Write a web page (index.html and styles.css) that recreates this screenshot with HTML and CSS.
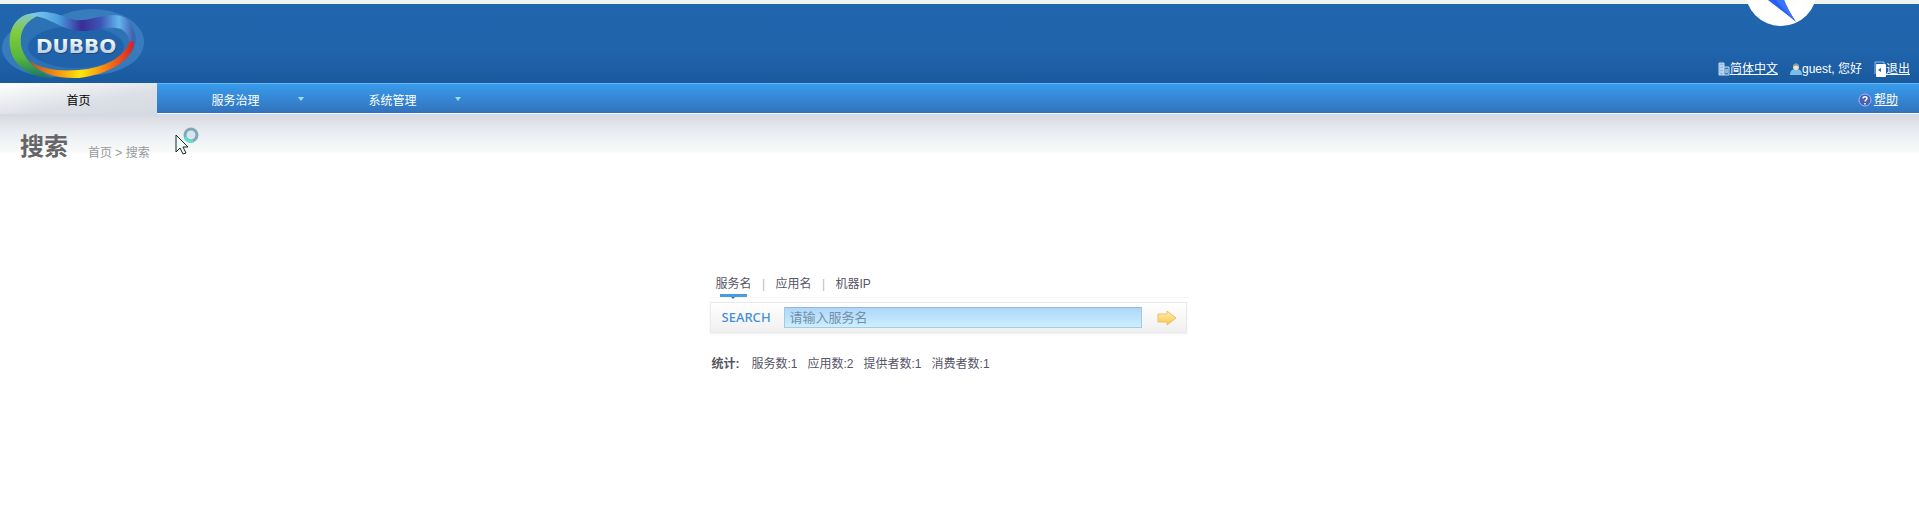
FILE: index.html
```html
<!DOCTYPE html>
<html lang="zh-CN">
<head>
    <meta charset="UTF-8">
    <meta name="viewport" content="width=device-width, initial-scale=1.0">
    <title>Dubbo</title>
    <link rel="stylesheet" href="styles.css">
</head>
<body>

    <header class="header">
        <a class="logo" href="#" aria-label="DUBBO">
            <svg width="146" height="79" viewBox="0 4 146 79">
                <defs>
                    <linearGradient id="top" x1="28" y1="0" x2="135" y2="0" gradientUnits="userSpaceOnUse">
                        <stop offset="0" stop-color="#8fd0f0"/>
                        <stop offset=".28" stop-color="#4aa0e0"/>
                        <stop offset=".5" stop-color="#392d96"/>
                        <stop offset=".68" stop-color="#3c55b4"/>
                        <stop offset=".85" stop-color="#62b7ee"/>
                        <stop offset="1" stop-color="#4052a8"/>
                    </linearGradient>
                    <linearGradient id="left" x1="0" y1="14" x2="0" y2="76" gradientUnits="userSpaceOnUse">
                        <stop offset="0" stop-color="#7fc8c8"/>
                        <stop offset=".3" stop-color="#82cc3c"/>
                        <stop offset=".7" stop-color="#55b83c"/>
                        <stop offset="1" stop-color="#1f7c60"/>
                    </linearGradient>
                    <linearGradient id="bottom" x1="28" y1="0" x2="134" y2="0" gradientUnits="userSpaceOnUse">
                        <stop offset="0" stop-color="#a5552c"/>
                        <stop offset=".25" stop-color="#f28a10"/>
                        <stop offset=".5" stop-color="#ffe60a"/>
                        <stop offset=".75" stop-color="#f47a12"/>
                        <stop offset="1" stop-color="#d81e28"/>
                    </linearGradient>
                    <linearGradient id="letters" x1="0" y1="38" x2="0" y2="54" gradientUnits="userSpaceOnUse">
                        <stop offset="0" stop-color="#fff"/>
                        <stop offset="1" stop-color="#bccbdc"/>
                    </linearGradient>
                </defs>
                <ellipse cx="52" cy="48" rx="50" ry="29" fill="#4a8cca" opacity=".6"/>
                <ellipse cx="92" cy="42" rx="52" ry="33" fill="#4386c4" opacity=".7"/>
                <path d="M24 19C48 10 63 23 84 23S120 12 132 27C144 43 129 62 104 71C78 79 45 78 26 62C12 49 14 30 24 19Z" fill="#2e72b6"/>
                <ellipse cx="76" cy="47" rx="48" ry="21" fill="#2063ab"/>
                <path d="M34 13C9 15 5 42 14 59C22 72 37 78 54 78C38 72 24 61 21 45C19 30 26 20 42 14Z" fill="url(#left)"/>
                <path d="M29 15C45 7 60 16 75 20C90 22 107 12 121 16C131 19 135 28 134 43C133 49 131 53 129 52C130 42 130 34 121 29C108 25 98 31 82 31C62 31 51 17 29 15Z" fill="url(#top)"/>
                <path d="M28 60C44 71 62 71 79 70C104 68 124 58 130 41L134 42C134 60 107 75 79 78C56 79 38 73 28 60Z" fill="url(#bottom)"/>
                <text class="logo-shadow" x="37" y="54">DUBBO</text>
                <text class="logo-text" x="36" y="53" fill="url(#letters)">DUBBO</text>
            </svg>
        </a>
        <div class="user-bar">
            <span class="user-item">
                <svg width="12" height="14" viewBox="0 0 12 14">
                    <path d="M1 1h5v12H1z" fill="#8fb9e2" stroke="#c4dcf4"/>
                    <path d="M6 5h5v8H6z" fill="#3c7cbc" stroke="#c4dcf4"/>
                    <path d="M2 4h3M2 7h3M2 10h3M7 8h3M7 10h3" stroke="#dcecfb"/>
                </svg>
                <a href="#">简体中文</a>
            </span>
            <span class="user-item">
                <svg width="12" height="14" viewBox="0 0 12 14">
                    <path d="M0 13c0-4 2-6 6-6s6 2 6 6z" fill="#7cbdec"/>
                    <circle cx="6" cy="5" r="3" fill="#f3e4c0"/>
                    <path d="M3 5c0-5 6-5 6 0C7 3 5 3 3 5z" fill="#8c9a9c"/>
                </svg>
                <span>guest, 您好</span>
            </span>
            <span class="user-item">
                <svg width="12" height="16" viewBox="0 0 12 16">
                    <path d="M1 13V1h9v2" fill="none" stroke="#8fc0ea"/>
                    <rect x="2" y="3" width="10" height="13" rx="1" fill="#fff"/>
                    <path d="M4 9l3-2v4z" fill="#2868ac"/>
                </svg>
                <a href="#">退出</a>
            </span>
        </div>
        <svg class="bird" width="72" height="28" viewBox="0 0 72 28">
            <circle cx="36" cy="-10" r="36" fill="#fff"/>
            <path d="M23 0H39Q43 10 51 22Q44 16 36 10Z" fill="#2a5cf6"/>
            <path d="M31 0H39Q43 10 51 22Q40 12 31 0Z" fill="#3a74fb"/>
        </svg>
    </header>

    <nav class="nav">
        <a class="nav-item active" href="#">首页</a>
        <a class="nav-item" href="#">服务治理<span class="caret"></span></a>
        <a class="nav-item" href="#">系统管理<span class="caret"></span></a>
        <span class="help">
            <svg width="14" height="14" viewBox="0 0 14 14">
                <circle cx="7" cy="7" r="6" fill="#4b5fb4" stroke="#a9b9e6"/>
                <path d="M5 5.500C5 3 9 3 9 5.500C9 7 7 7 7 8.500M7 10v1.500" fill="none" stroke="#fff" stroke-width="1.500"/>
            </svg>
            <a href="#">帮助</a>
        </span>
    </nav>

    <div class="title-bar">
        <h1>搜索</h1>
        <div class="breadcrumb">首页 &gt; 搜索</div>
        <svg class="cursor" width="26" height="30" viewBox="0 0 26 30">
            <circle cx="16" cy="9" r="6" fill="#d9e6ee" stroke="#7fa9b8" stroke-width="3"/>
            <path d="M10 11A6 6 0 0 0 18 15" fill="none" stroke="#5fe0cb" stroke-width="3"/>
            <path d="M1 9V26L5 22L8 28L11 27L8 21H13Z" fill="#e8fbf6" stroke="#222"/>
        </svg>
    </div>

    <main class="search">
        <div class="tabs">
            <button type="button" class="tab current">服务名</button>
            <span class="sep">|</span>
            <button type="button" class="tab">应用名</button>
            <span class="sep">|</span>
            <button type="button" class="tab">机器IP</button>
        </div>
        <form class="search-bar">
            <label for="keyword">SEARCH</label>
            <input type="text" id="keyword" placeholder="请输入服务名">
            <button type="button" class="go" aria-label="搜索">
                <svg width="22" height="16" viewBox="0 0 22 16">
                    <defs>
                        <linearGradient id="arrow" x1="0" y1="0" x2="0" y2="1">
                            <stop offset="0" stop-color="#fff0b4"/>
                            <stop offset="1" stop-color="#f9c54a"/>
                        </linearGradient>
                    </defs>
                    <path d="M2 4H11V1L20 8L11 15V12H2Z" fill="url(#arrow)" stroke="#efbd68" stroke-linejoin="round"/>
                </svg>
            </button>
        </form>
        <div class="stats">
            <strong>统计:</strong>
            <span>服务数:1</span>
            <span>应用数:2</span>
            <span>提供者数:1</span>
            <span>消费者数:1</span>
        </div>
    </main>

</body>
</html>
```
FILE: styles.css
```css
body {
    margin: 0;
    font-family: "Liberation Sans", "Noto Sans CJK SC", sans-serif;
    font-size: 12px;
    line-height: 18px;
    color: #555566;
    background-color: #fff;
}

/* header */
.header {
    position: relative;
    display: flex;
    justify-content: space-between;
    align-items: flex-end;
    border-top: 4px solid #f1f3ef;
    background: linear-gradient(#2165ae, #2064ac 60%, #195a9e);
}

.logo svg {
    display: block;
}

.logo-text,
.logo-shadow {
    font-family: "DejaVu Sans", sans-serif;
    font-size: 20px;
    font-weight: bold;
}

.logo-shadow {
    fill: #174a80;
}

.user-bar {
    display: flex;
    gap: 12px;
    padding: 0 9px 5px 0;
    color: #fff;
}

.user-item,
.help {
    display: flex;
    align-items: center;
}

.user-bar a,
.help a {
    color: #fff;
    text-decoration: underline;
}

.bird {
    position: absolute;
    top: -4px;
    right: 102px;
}

/* menu */
.nav {
    display: flex;
    height: 29px;
    border-top: 1px solid #6cb8f5;
    border-bottom: 1px solid #fff;
    background: linear-gradient(#389cec, #3272bc);
}

.nav-item {
    position: relative;
    width: 157px;
    line-height: 34px;
    text-align: center;
    color: #fff;
    text-decoration: none;
}

.nav-item.active {
    margin: -1px 0;
    line-height: 36px;
    color: #000;
    background: linear-gradient(170deg, #fff, #dcdfe6 60%, #d4d9e2);
}

.caret {
    position: absolute;
    top: 13px;
    right: 10px;
    border: 3px solid transparent;
    border-top: 4px solid #9fdcfb;
    border-bottom: 0;
}

.help {
    gap: 2px;
    margin-left: auto;
    padding: 3px 21px 0 0;
}

/* page title */
.title-bar {
    position: relative;
    display: flex;
    align-items: flex-end;
    gap: 20px;
    height: 48px;
    padding-left: 20px;
    background: linear-gradient(#d2d8e6, #dcdee3 5px, #e9edf1 18px, #f9fafa 38px, #fff 39px);
}

.title-bar h1 {
    margin: 0;
    font-size: 24px;
    line-height: 30px;
    color: #666;
}

.breadcrumb {
    color: #999;
}

.cursor {
    position: absolute;
    top: 12px;
    left: 175px;
}

/* search box */
.search {
    width: 500px;
    margin: 113px auto 0;
}

.tabs {
    display: flex;
    width: 473px;
    padding-left: 6px;
    border-bottom: 1px solid #f6f6f6;
}

.tab {
    position: relative;
    height: 22px;
    padding: 0 0 4px;
    border: 0;
    background: none;
    font: inherit;
    color: inherit;
    cursor: pointer;
}

.tab.current::before {
    content: "";
    position: absolute;
    left: 4px;
    bottom: 0;
    width: 27px;
    height: 3px;
    background-color: #4a9ce0;
}

.tab.current::after {
    content: "";
    position: absolute;
    left: 15px;
    bottom: -2px;
    border: 2px solid transparent;
    border-top-color: #2476be;
    border-bottom: 0;
}

.sep {
    width: 24px;
    text-align: center;
    color: #bbb;
}

.search-bar {
    display: flex;
    align-items: center;
    box-sizing: border-box;
    width: 477px;
    height: 31px;
    margin-top: 4px;
    padding-left: 11px;
    border: 1px solid #e8eaec;
    background: linear-gradient(#fff, #f0f0f0);
    box-shadow: 0 1px 2px #eee;
}

.search-bar label {
    width: 62px;
    padding-bottom: 2px;
    font-family: "Noto Sans", sans-serif;
    font-size: 13px;
    font-weight: 500;
    color: #4590d9;
}

.search-bar input {
    box-sizing: border-box;
    width: 358px;
    height: 21px;
    padding: 0 5px;
    border: 1px solid #a4cbe4;
    border-top-color: #94b8d6;
    background: linear-gradient(#aed6fa, #ccf0ff);
    font-family: inherit;
    font-size: 13px;
    color: #555;
}

.search-bar input::placeholder {
    color: #7490a8;
}

.go {
    margin-left: 14px;
    padding: 0;
    border: 0;
    background: none;
    cursor: pointer;
}

.go svg {
    display: block;
}

.stats {
    display: flex;
    gap: 10px;
    margin-top: 22px;
    padding-left: 2px;
}

.stats strong {
    margin-right: 2px;
}
```
